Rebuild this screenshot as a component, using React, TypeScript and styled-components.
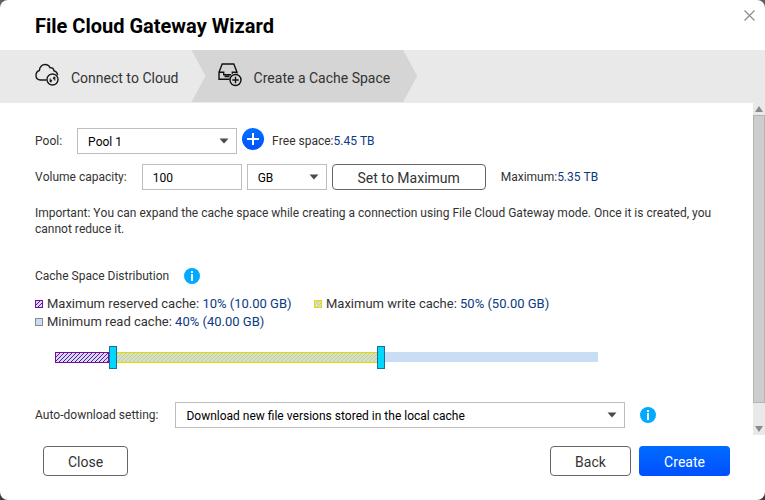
import React, { useState } from "react";
import styled, { createGlobalStyle, css } from "styled-components";

const GlobalStyle = createGlobalStyle`
  *, *::before, *::after { box-sizing: border-box; }
  body {
    margin: 0;
    background: linear-gradient(#5b5e6b, #3c3c3e);
    font-family: Roboto, "Liberation Sans", sans-serif;
    font-size: 12px;
    line-height: 16px;
    font-kerning: none;
    color: #333;
  }
  button, input, select { font-family: inherit; font-kerning: inherit; }
`;

const Dialog = styled.main`
  display: flex;
  flex-direction: column;
  min-height: 100vh;
  background: #fff;
  border-radius: 8px;
  overflow: hidden;
`;

const Header = styled.header`
  display: flex;
  justify-content: space-between;
  align-items: flex-start;
  height: 50px;
  padding: 8px 8px 0 35px;
`;

const Title = styled.h1`
  margin: 6px 0 0;
  font-size: 20px;
  line-height: 24px;
  font-weight: 700;
  color: #000;
`;

const CloseIconButton = styled.button`
  display: flex;
  padding: 0;
  border: 0;
  background: none;
  color: #8c8c8c;
`;

const Steps = styled.ol`
  display: flex;
  margin: 0;
  padding: 0 0 1px;
  list-style: none;
  background: #e9e9e9;
`;

const Step = styled.li<{ $active?: boolean }>`
  display: flex;
  align-items: center;
  gap: 12px;
  height: 52px;
  padding: 4px 27px 0 35px;
  font-size: 14px;
  line-height: 20px;
  svg { margin-bottom: 6px; }
  ${(p) =>
    p.$active &&
    css`
      margin-left: -14px;
      padding-left: 26px;
      background: #d5d5d5;
      clip-path: polygon(0 0, calc(100% - 14px) 0, 100% 50%, calc(100% - 14px) 100%, 0 100%, 14px 50%);
    `}
`;

const Body = styled.div`
  display: flex;
  flex: 1;
`;

const Form = styled.form`
  flex: 1;
  min-width: 0;
  padding: 25px 24px 7px 35px;
`;

const Row = styled.div`
  display: flex;
  align-items: center;
  margin-bottom: 10px;
  &:last-child { margin-bottom: 0; }
`;

const Label = styled.label<{ $gap: number }>`
  margin-right: ${(p) => p.$gap}px;
  white-space: nowrap;
`;

const Value = styled.span`
  color: #0a3a82;
`;

const Note = styled.span<{ $gap: number }>`
  margin-left: ${(p) => p.$gap}px;
`;

const field = css`
  height: 26px;
  border: 1px solid #bdbdbd;
  border-radius: 0;
  background: #fff;
  padding: 2px 10px 0;
  font-size: 12px;
  line-height: 16px;
  color: #000;
`;

const SelectBox = styled.span<{ $width: number }>`
  display: grid;
  align-items: center;
  width: ${(p) => p.$width}px;
  > * { grid-area: 1 / 1; }
  svg { justify-self: end; margin-right: 8px; pointer-events: none; }
`;

const Select = styled.select`
  ${field}
  width: 100%;
  appearance: none;
`;

const TextInput = styled.input`
  ${field}
  width: 100px;
  margin-right: 5px;
`;

const RoundButton = styled.button`
  display: flex;
  align-items: center;
  justify-content: center;
  width: 22px;
  height: 22px;
  margin: 0 0 4px 5px;
  padding: 0;
  border: 0;
  border-radius: 50%;
  background: linear-gradient(#0070ff, #0050ff);
  color: #fff;
`;

const Button = styled.button<{ $width: number; $primary?: boolean; $small?: boolean }>`
  width: ${(p) => p.$width}px;
  height: ${(p) => (p.$small ? 26 : 30)}px;
  padding: 2px 0 0;
  border: ${(p) => (p.$primary ? "0" : "1px solid #666")};
  border-radius: 4px;
  background: ${(p) => (p.$primary ? "linear-gradient(#006cff, #0050ff)" : "#fff")};
  color: ${(p) => (p.$primary ? "#fff" : "#333")};
  font-size: 14px;
  line-height: 20px;
`;

const Important = styled.p`
  margin: 15px 0 30px;
`;

const SectionHead = styled.div`
  display: flex;
  align-items: center;
  gap: 15px;
  height: 18px;
`;

const SectionTitle = styled.h2`
  margin: 0;
  font-size: 12px;
  line-height: 16px;
  font-weight: 400;
`;

const InfoButton = styled.button`
  display: flex;
  padding: 0;
  border: 0;
  background: none;
`;

const Legend = styled.ul`
  display: grid;
  grid-template-columns: 259px 1fr;
  column-gap: 20px;
  margin: 10px 0 13px;
  padding: 0;
  list-style: none;
  font-size: 13px;
  line-height: 18px;
`;

const LegendItem = styled.li`
  display: flex;
  align-items: center;
  gap: 4px;
`;

type Kind = "reserved" | "write" | "read";

const hatch = (color: string) =>
  `linear-gradient(135deg, #c9ddf5 0 40%, ${color} 40% 60%, #c9ddf5 60%) 0 0 / 4px 4px`;

const fills: Record<Kind, { border: string; background: string }> = {
  reserved: { border: "#7d0a9b", background: hatch("#7d0a9b") },
  write: { border: "#e6d800", background: hatch("#e6d800") },
  read: { border: "#8c8c8c", background: "#c9ddf5" },
};

const Swatch = styled.span<{ $kind: Kind }>`
  width: 8px;
  height: 8px;
  border: 1px solid ${(p) => fills[p.$kind].border};
  background: ${(p) => fills[p.$kind].background};
`;

const Slider = styled.div`
  display: grid;
  align-items: center;
  max-width: 543px;
  height: 25px;
  margin: 0 0 33px 20px;
  > * { grid-area: 1 / 1; }
`;

const Track = styled.div`
  display: flex;
  height: 10px;
  background: #c9ddf5;
`;

const Segment = styled.div<{ $kind: Kind }>`
  height: 11px;
  border: 1px solid ${(p) => fills[p.$kind].border};
  background: ${(p) => fills[p.$kind].background};
`;

const thumb = css`
  width: 8px;
  height: 23px;
  border: 1px solid #1b6e96;
  border-radius: 0;
  background: #00d8ff;
  pointer-events: auto;
`;

const Range = styled.input`
  appearance: none;
  align-self: end;
  width: calc(100% + 2px);
  height: 23px;
  margin: 0;
  background: none;
  pointer-events: none;
  &::-webkit-slider-thumb { appearance: none; ${thumb} }
  &::-moz-range-thumb { ${thumb} }
`;

const Scrollbar = styled.div`
  display: flex;
  flex-direction: column;
  align-items: center;
  width: 12px;
  background: #e9e9e9;
  color: #8a8a8a;
  svg { flex: none; }
`;

const ScrollThumb = styled.div`
  flex: 1;
  width: 12px;
  margin-bottom: 20px;
  border: 1px solid #b5b5b5;
  background: #cdcdcd;
`;

const Footer = styled.footer`
  display: flex;
  gap: 8px;
  padding: 11px 35px 24px 43px;
`;

const Spacer = styled.span`
  flex: 1;
`;

const Caret = () => (
  <svg width="10" height="6" viewBox="0 0 10 6" aria-hidden="true">
    <path d="M0.5 0.5h9L5 5.5z" fill="#4a4a4a" />
  </svg>
);

const CloudIcon = () => (
  <svg width="24" height="24" viewBox="0 0 24 24" fill="none" stroke="#1a1a1a" strokeWidth="1.4" aria-hidden="true">
    <path d="M11.500 17H5.500C2.800 17 1 15 1 12.300c0-2.400 1.400-4.200 3.400-4.800C4.500 4 7 1.500 10 1.500c2.300 0 4.200 1.200 5 3.200 2.200-.2 3.800 1.200 4 3.200 1.900.4 3.300 1.800 3.700 4.300" />
    <circle cx="17.500" cy="16.500" r="5.500" />
    <path d="M15.200 15.500v3.200h1.500M19.800 17.500v-3.200h-1.500M15.400 18.500l1.600-1.600M18 16.100l1.600-1.600" strokeWidth="1.100" />
  </svg>
);

const CacheIcon = () => (
  <svg width="24" height="24" viewBox="0 0 24 24" fill="none" stroke="#111" strokeWidth="1.400" aria-hidden="true">
    <path d="M11.500 16.300H1V9.200L4.200 1h11.600L19 9.200v1.300M1 9.200h4.700v2.600h7.500M6.500 13.500h5M19 9.200h-4.700v1.500" />
    <circle cx="17.500" cy="17" r="5.500" />
    <path d="M17.500 13.800v6.400M14.300 17h6.400" />
  </svg>
);

const InfoIcon = () => (
  <svg width="16" height="16" viewBox="0 0 16 16" aria-hidden="true">
    <circle cx="8" cy="8" r="8" fill="#00aaff" />
    <path d="M7 3h2v2H7zM7 6h2v7H7z" fill="#fff" />
  </svg>
);

export default function App() {
  const [reserved, setReserved] = useState(10);
  const [split, setSplit] = useState(60);
  const [capacity, setCapacity] = useState("100");

  const total = Number(capacity) || 0;
  const share = (p: number) => `${p}% (${((total * p) / 100).toFixed(2)} GB)`;
  const legend: { kind: Kind; label: string; percent: number }[] = [
    { kind: "reserved", label: "Maximum reserved cache:", percent: reserved },
    { kind: "write", label: "Maximum write cache:", percent: split - reserved },
    { kind: "read", label: "Minimum read cache:", percent: 100 - split },
  ];

  return (
    <>
      <GlobalStyle />
      <Dialog>
        <Header>
          <Title>File Cloud Gateway Wizard</Title>
          <CloseIconButton type="button" aria-label="Close wizard">
            <svg width="15" height="15" viewBox="0 0 15 15" stroke="currentColor" strokeWidth="1.200" aria-hidden="true">
              <path d="M2.500 2.500l10 10M12.500 2.500l-10 10" />
            </svg>
          </CloseIconButton>
        </Header>
        <Steps>
          <Step>
            <CloudIcon />
            Connect to Cloud
          </Step>
          <Step $active aria-current="step">
            <CacheIcon />
            Create a Cache Space
          </Step>
        </Steps>
        <Body>
          <Form id="cache-form" onSubmit={(e) => e.preventDefault()}>
            <Row>
              <Label htmlFor="pool" $gap={15}>Pool:</Label>
              <SelectBox $width={160}>
                <Select id="pool"><option>Pool 1</option></Select>
                <Caret />
              </SelectBox>
              <RoundButton type="button" aria-label="Add pool">
                <svg width="12" height="12" viewBox="0 0 12 12" stroke="currentColor" strokeWidth="2" aria-hidden="true">
                  <path d="M6 0v12M0 6h12" />
                </svg>
              </RoundButton>
              <Note $gap={8}>Free space:<Value>5.45 TB</Value></Note>
            </Row>
            <Row>
              <Label htmlFor="capacity" $gap={15}>Volume capacity:</Label>
              <TextInput id="capacity" value={capacity} onChange={(e) => setCapacity(e.target.value)} />
              <SelectBox $width={80}>
                <Select aria-label="Capacity unit"><option>GB</option></Select>
                <Caret />
              </SelectBox>
              <Note $gap={5}>
                <Button type="button" $width={154} $small>Set to Maximum</Button>
              </Note>
              <Note $gap={15}>Maximum:<Value>5.35 TB</Value></Note>
            </Row>
            <Important>
              Important: You can expand the cache space while creating a connection using File Cloud Gateway mode. Once it is created, you cannot reduce it.
            </Important>
            <SectionHead>
              <SectionTitle>Cache Space Distribution</SectionTitle>
              <InfoButton type="button" aria-label="About cache space distribution"><InfoIcon /></InfoButton>
            </SectionHead>
            <Legend>
              {legend.map((item) => (
                <LegendItem key={item.kind}>
                  <Swatch $kind={item.kind} />
                  <span>{item.label} <Value>{share(item.percent)}</Value></span>
                </LegendItem>
              ))}
            </Legend>
            <Slider>
              <Track>
                <Segment $kind="reserved" style={{ width: `${reserved}%` }} />
                <Segment $kind="write" style={{ width: `${split - reserved}%` }} />
              </Track>
              <Range type="range" aria-label="Reserved cache limit" value={reserved}
                onChange={(e) => setReserved(Math.min(Number(e.target.value), split))} />
              <Range type="range" aria-label="Write cache limit" value={split}
                onChange={(e) => setSplit(Math.max(Number(e.target.value), reserved))} />
            </Slider>
            <Row>
              <Label htmlFor="auto" $gap={17}>Auto-download setting:</Label>
              <SelectBox $width={450}>
                <Select id="auto"><option>Download new file versions stored in the local cache</option></Select>
                <Caret />
              </SelectBox>
              <Note $gap={15}>
                <InfoButton type="button" aria-label="About auto-download"><InfoIcon /></InfoButton>
              </Note>
            </Row>
          </Form>
          <Scrollbar aria-hidden="true">
            <svg width="12" height="12" viewBox="0 0 12 12"><path d="M2 9h8L6 3z" fill="currentColor" /></svg>
            <ScrollThumb />
            <svg width="12" height="12" viewBox="0 0 12 12"><path d="M2 3h8L6 9z" fill="currentColor" /></svg>
          </Scrollbar>
        </Body>
        <Footer>
          <Button type="button" $width={85}>Close</Button>
          <Spacer />
          <Button type="button" $width={81}>Back</Button>
          <Button type="submit" form="cache-form" $width={91} $primary>Create</Button>
        </Footer>
      </Dialog>
    </>
  );
}
